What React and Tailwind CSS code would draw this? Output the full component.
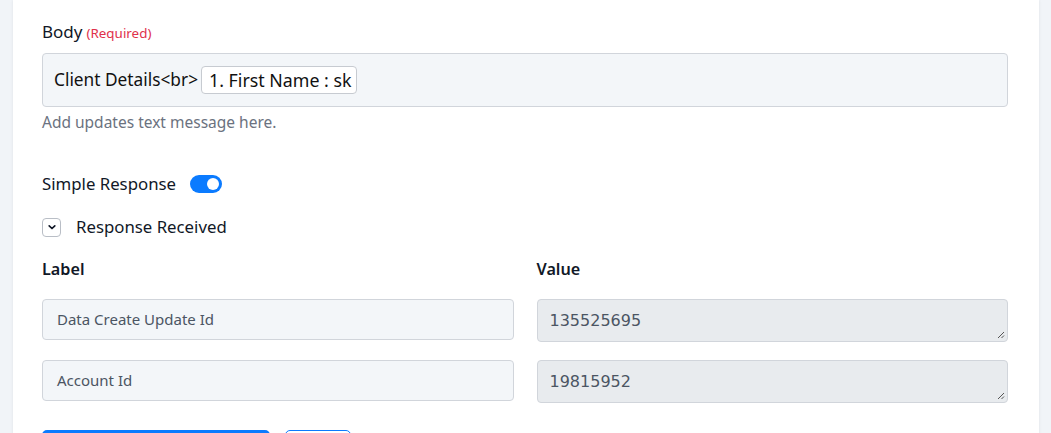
import React from "react";

export default function App() {
  return (
    <div className="w-[1051px] h-[433px] overflow-hidden bg-[#f1f4f8] flex" style={{ fontFamily: '"Noto Sans", "Open Sans", sans-serif' }}>
      <div className="ml-[13px] w-[1026px] h-[460px] bg-white shadow-[0_0_3px_rgba(0,0,0,0.08)] pl-[29px] pt-[20px] box-border">
        <div className="w-[966px]">
          <div className="flex items-baseline gap-[4px] text-[17px] text-[#111827] leading-[24px]">
            <span>Body</span>
            <span className="text-[13.4px] text-[#e0314b]">(Required)</span>
          </div>
          <div className="mt-[8px] h-[54px] rounded-[4px] border border-[#d1d5db] bg-[#f3f6f9] flex items-center pl-[11px] text-[17.3px] text-[#111]">
            <span>Client Details&lt;br&gt;</span>
            <span className="ml-[3px] h-[28px] pl-[7px] pr-[5px] flex items-center rounded-[4px] border border-[#c7cbd1] bg-white text-[17.8px]">1. First Name : sk</span>
          </div>
          <div className="mt-[4px] text-[15.5px] text-[#6b7280] leading-[22px]">Add updates text message here.</div>

          <div className="mt-[39px] flex items-center text-[16.8px] text-[#111827] leading-[24px]">
            <span>Simple Response</span>
            <span className="ml-[14px] w-[32px] h-[18px] rounded-full bg-[#0b7bff] flex items-center justify-end pr-[3px]">
              <span className="w-[12px] h-[12px] rounded-full bg-white" />
            </span>
          </div>

          <div className="mt-[19px] flex items-center text-[16.8px] text-[#111827] leading-[24px]">
            <span className="w-[19px] h-[19px] rounded-[4px] border border-[#b9bec6] flex items-center justify-center">
              <svg width="10" height="10" viewBox="0 0 10 10" fill="none">
                <path d="M2.2 3.8 L5 6.5 L7.8 3.8" stroke="#111827" strokeWidth="1.7" strokeLinecap="round" strokeLinejoin="round" />
              </svg>
            </span>
            <span className="ml-[15px]">Response Received</span>
          </div>

          <div className="mt-[18px] grid grid-cols-2 gap-x-[23px] text-[16.2px] font-semibold text-[#111827] leading-[24px]">
            <div>Label</div>
            <div>Value</div>
          </div>

          <div className="mt-[18px] grid grid-cols-2 gap-x-[23px] gap-y-[18px] text-[#4b5563]">
            <div className="h-[41px] rounded-[4px] border border-[#d1d5db] bg-[#f3f6f9] flex items-center pl-[14px] text-[15px]">Data Create Update Id</div>
            <div className="relative h-[43px] rounded-[4px] border border-[#d1d5db] bg-[#e8ebee] flex items-center pl-[12px] text-[16px]" style={{ fontFamily: '"DejaVu Sans", sans-serif' }}>
              135525695
              <Grip />
            </div>
            <div className="h-[41px] rounded-[4px] border border-[#d1d5db] bg-[#f3f6f9] flex items-center pl-[14px] text-[15px]">Account Id</div>
            <div className="relative h-[43px] rounded-[4px] border border-[#d1d5db] bg-[#e8ebee] flex items-center pl-[12px] text-[16px]" style={{ fontFamily: '"DejaVu Sans", sans-serif' }}>
              19815952
              <Grip />
            </div>
          </div>

          <div className="mt-[27px] flex gap-[15px]">
            <div className="w-[228px] h-[40px] rounded-[5px] bg-[#0b7bff]" />
            <div className="w-[66px] h-[40px] rounded-[5px] border border-[#0b7bff] bg-white" />
          </div>
        </div>
      </div>
    </div>
  );
}

function Grip() {
  return (
    <svg className="absolute right-[2px] bottom-[2px]" width="9" height="9" viewBox="0 0 9 9">
      <path d="M8 2 L2 8 M8 5.5 L5.5 8" stroke="#555" strokeWidth="1" />
    </svg>
  );
}
